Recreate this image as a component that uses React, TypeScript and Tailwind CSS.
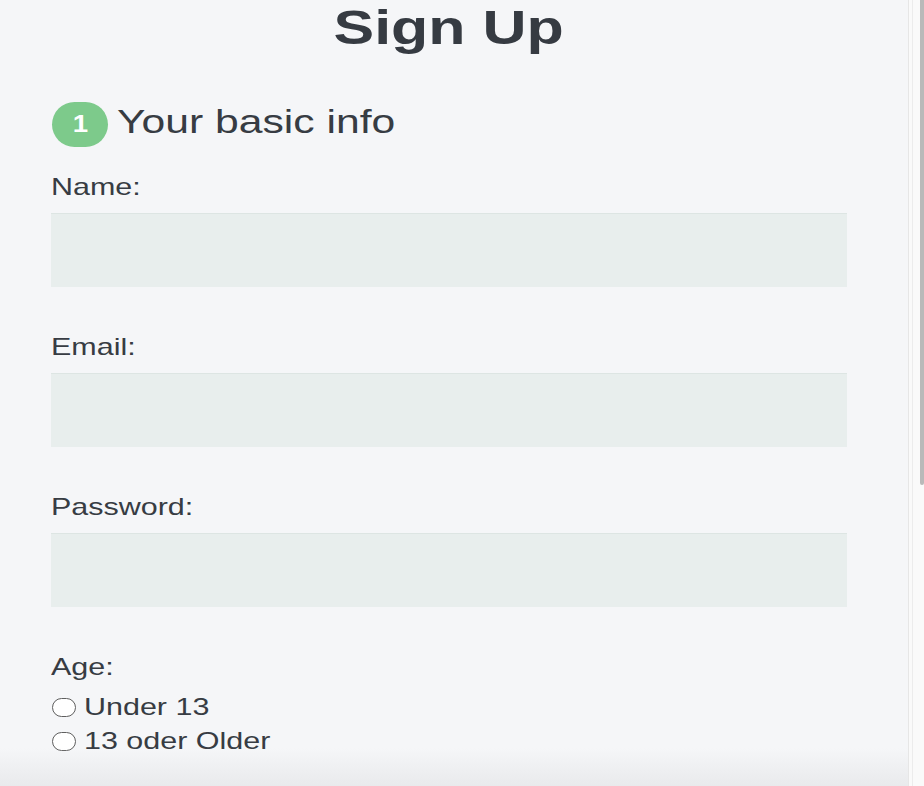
import React from "react";

const S = ({ children, className = "" }: { children: React.ReactNode; className?: string }) => (
  <span className={`inline-block origin-left scale-x-[1.27] whitespace-nowrap ${className}`}>{children}</span>
);

function Field({ label, first = false }: { label: string; first?: boolean }) {
  return (
    <div className={first ? "mt-[37px]" : "mt-[48px]"}>
      <label className="block h-[24px] text-[24px] leading-[24px]">
        <S>{label}</S>
      </label>
      <input
        type="text"
        className="mt-[14px] block h-[74px] w-[796px] border-t border-[#dde5e3] bg-[#e8eeed] outline-none"
      />
    </div>
  );
}

function Radio({ label, className = "" }: { label: string; className?: string }) {
  return (
    <label className={`flex h-[24px] items-center ${className}`}>
      <input
        type="radio"
        name="age"
        className="ml-[1px] h-[19px] w-[24px] appearance-none rounded-full border border-[#5e5e5e] bg-white"
      />
      <span className="ml-[8px] text-[24px] leading-[24px]">
        <S>{label}</S>
      </span>
    </label>
  );
}

export default function App() {
  return (
    <div className="relative h-[786px] w-[924px] overflow-hidden bg-[#f5f6f8] font-['Liberation_Sans',Arial,sans-serif] text-[#373c43]">
      <div className="flex h-full">
        <main className="w-[908px] pl-[51px] pt-[4px]">
          <h1 className="w-[796px] text-center text-[48px] font-bold leading-[48px] text-[#363b42]">
            <span className="inline-block origin-center scale-x-[1.27] whitespace-nowrap">Sign Up</span>
          </h1>
          <div className="mt-[52px] flex h-[34px] items-start">
            <div className="-mt-[2px] ml-[1px] flex h-[45px] w-[56px] items-center justify-center rounded-full bg-[#7dca8b] text-[23px] font-bold text-white">
              <span className="inline-block scale-x-[1.2]">1</span>
            </div>
            <h2 className="ml-[9px] text-[34px] leading-[34px]">
              <S className="scale-x-[1.255]">Your basic info</S>
            </h2>
          </div>
          <Field label="Name:" first />
          <Field label="Email:" />
          <Field label="Password:" />
          <div className="mt-[48px]">
            <div className="h-[24px] text-[24px] leading-[24px]">
              <S>Age:</S>
            </div>
            <Radio label="Under 13" className="mt-[16px]" />
            <Radio label="13 oder Older" className="mt-[10px]" />
          </div>
        </main>
        <aside className="flex w-[16px] border-l border-[#e6e6e6] bg-[#fafafa]">
          <div className="ml-[3px] w-px bg-[#ececec]" />
          <div className="ml-auto h-[485px] w-[4px] rounded-b-sm bg-[#b9b9b9]" />
        </aside>
      </div>
      <div className="pointer-events-none absolute bottom-0 left-0 h-[38px] w-[908px] bg-gradient-to-b from-transparent to-[#e9eaec]" />
    </div>
  );
}
